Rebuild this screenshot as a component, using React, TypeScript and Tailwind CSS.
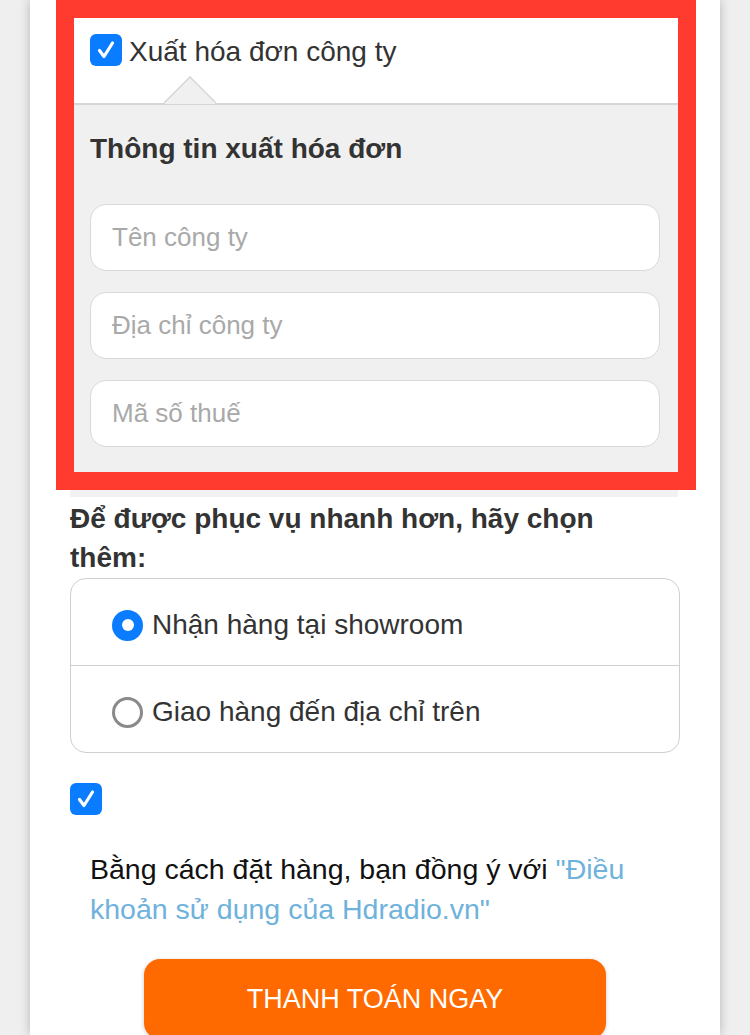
import React, { useState } from 'react';

const font = { fontFamily: '"Liberation Sans", Arial, sans-serif' };

const CheckIcon: React.FC = () => (
  <svg viewBox="0 0 24 24" className="h-[24px] w-[24px]" fill="none">
    <path d="M5.5 12.5l4.5 6L18.5 5" stroke="white" strokeWidth="3.2" strokeLinecap="round" strokeLinejoin="round" />
  </svg>
);

const Checkbox: React.FC<{ checked: boolean; onClick: () => void }> = ({ checked, onClick }) => (
  <button
    type="button"
    onClick={onClick}
    className={`flex h-[32px] w-[32px] shrink-0 items-center justify-center rounded-[6px] ${
      checked ? 'bg-[#0a7cff]' : 'border-2 border-[#999] bg-white'
    }`}
  >
    {checked && <CheckIcon />}
  </button>
);

const Radio: React.FC<{ checked: boolean }> = ({ checked }) =>
  checked ? (
    <span className="flex h-[31px] w-[31px] shrink-0 items-center justify-center rounded-full bg-[#0a7cff]">
      <span className="h-[12px] w-[12px] rounded-full bg-white" />
    </span>
  ) : (
    <span className="h-[31px] w-[31px] shrink-0 rounded-full border-[3px] border-[#8a8a8a] bg-white" />
  );

const App: React.FC = () => {
  const [invoice, setInvoice] = useState(true);
  const [agree, setAgree] = useState(true);
  const [delivery, setDelivery] = useState<'showroom' | 'address'>('showroom');

  return (
    <div className="h-[1035px] overflow-hidden bg-[#efefef]" style={font}>
      <div className="ml-[30px] h-full w-[690px] bg-white shadow-[0_0_10px_rgba(0,0,0,0.25)]">
        {/* highlighted invoice block */}
        <div className="ml-[26px] w-[640px] border-[18px] border-[#ff3b30]">
          <div className="relative flex h-[85px] items-start gap-[7px] bg-white pl-[16px] pt-[16px]">
            <Checkbox checked={invoice} onClick={() => setInvoice(!invoice)} />
            <span className="pt-[2px] text-[28px] leading-[32px] text-[#333]">Xuất hóa đơn công ty</span>
            <svg className="absolute bottom-[-1px] left-[90px]" width="52" height="28" viewBox="0 0 52 28">
              <path d="M0 27 L26 1 L52 27" fill="#f0f0f0" stroke="#d6d6d6" strokeWidth="1.5" />
              <rect x="1" y="26" width="50" height="3" fill="#f0f0f0" />
            </svg>
          </div>
          <div className="border-t-[2px] border-[#d6d6d6] bg-[#f0f0f0] pb-[25px] pl-[16px] pr-[18px] pt-[26px]">
            <h3 className="text-[28px] font-bold leading-[36px] text-[#333]">Thông tin xuất hóa đơn</h3>
            <div className="mt-[37px] flex flex-col gap-[21px]">
              {['Tên công ty', 'Địa chỉ công ty', 'Mã số thuế'].map((p) => (
                <input
                  key={p}
                  placeholder={p}
                  className="h-[67px] w-full rounded-[16px] border-[1.5px] border-[#d9d9d9] bg-white px-[21px] text-[26px] text-[#333] outline-none placeholder:text-[#a9a9a9]"
                  style={font}
                />
              ))}
            </div>
          </div>
        </div>
        <div className="ml-[40px] h-[7px] w-[608px] bg-[#f2f2f2]" />

        <div className="px-[40px]">
          <h3 className="mt-[2px] max-w-[560px] text-[28px] font-bold leading-[39px] text-[#333]">
            Để được phục vụ nhanh hơn, hãy chọn thêm:
          </h3>
          <div className="mt-[1px] rounded-[16px] border-[1.5px] border-[#cfcfcf]">
            <button
              type="button"
              onClick={() => setDelivery('showroom')}
              className="flex h-[87px] w-full items-center gap-[9px] border-b-[1.5px] border-[#cfcfcf] pl-[41px] pt-[6px]"
            >
              <Radio checked={delivery === 'showroom'} />
              <span className="text-[28px] text-[#333]">Nhận hàng tại showroom</span>
            </button>
            <button
              type="button"
              onClick={() => setDelivery('address')}
              className="flex h-[86px] w-full items-center gap-[9px] pl-[41px] pt-[6px]"
            >
              <Radio checked={delivery === 'address'} />
              <span className="text-[28px] text-[#333]">Giao hàng đến địa chỉ trên</span>
            </button>
          </div>

          <div className="mt-[30px]">
            <Checkbox checked={agree} onClick={() => setAgree(!agree)} />
          </div>

          <p className="mt-[34px] pl-[20px] pr-[20px] text-[28.5px] leading-[40px] text-[#111]">
            Bằng cách đặt hàng, bạn đồng ý với{' '}
            <a href="#" className="text-[#6fb2dc]">
              "Điều khoản sử dụng của Hdradio.vn"
            </a>
          </p>

          <div className="mt-[30px] flex justify-center">
            <button
              type="button"
              className="flex h-[80px] w-[462px] items-center justify-center rounded-[16px] bg-[#ff6a00] text-[27px] text-white shadow-[0_1px_4px_rgba(0,0,0,0.2)]"
            >
              THANH TOÁN NGAY
            </button>
          </div>
        </div>
      </div>
    </div>
  );
};

export default App;
